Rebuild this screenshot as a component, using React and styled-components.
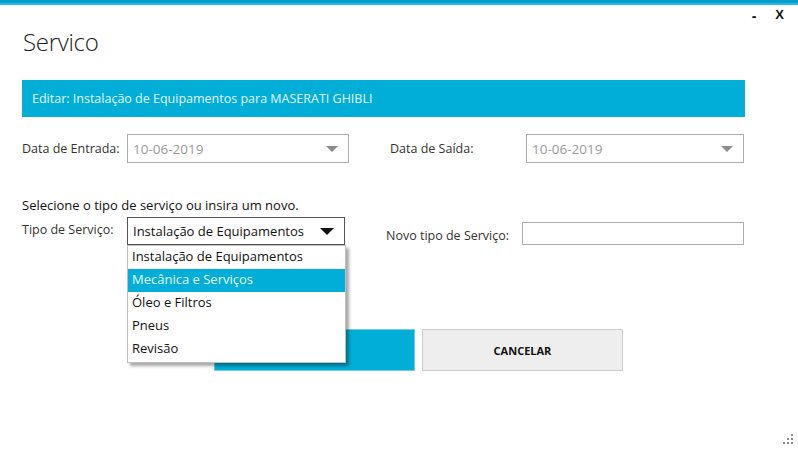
import React from "react";
import styled, { createGlobalStyle } from "styled-components";

const Global = createGlobalStyle`
  html, body { margin: 0; padding: 0; background: #fff; }
  body { font-family: "Open Sans", "Noto Sans", sans-serif; color: #222; }
  * { box-sizing: border-box; }
`;

const Window = styled.div`
  position: relative;
  width: 798px;
  height: 450px;
  background: #fff;
  overflow: hidden;
  display: flex;
  flex-direction: column;
`;

const TopBar = styled.div`
  height: 5px;
  background: #0a9dcb;
  border-bottom: 2px solid #1cbde6;
  flex-shrink: 0;
`;

const TitleRow = styled.div`
  height: 75px;
  display: flex;
  justify-content: space-between;
  padding: 0 14px 0 23px;
`;

const Title = styled.h1`
  margin: 20px 0 0;
  font-size: 24px;
  font-weight: 300;
  color: #222;
  letter-spacing: -0.3px;
`;

const Controls = styled.div`
  display: flex;
  gap: 16px;
  padding-top: 3px;
  align-items: flex-start;
`;

const Ctrl = styled.span`
  font-family: "Liberation Sans", sans-serif;
  font-size: ${(p) => p.$size}px;
  font-weight: 700;
  color: #111;
  line-height: 1;
  transform: ${(p) => p.$shift || "none"};
`;

const Header = styled.div`
  margin: 0 53px 0 22px;
  height: 37px;
  background: #00aed8;
  color: #e3f5fb;
  font-size: 12.5px;
  display: flex;
  align-items: center;
  padding-left: 10px;
`;

const Grid = styled.div`
  display: grid;
  grid-template-columns: ${(p) => p.$cols};
  align-items: ${(p) => p.$align || "center"};
  padding-left: 22px;
  margin-top: ${(p) => p.$mt}px;
`;

const Label = styled.span`
  font-size: 12.5px;
  color: #333;
  white-space: nowrap;
  align-self: ${(p) => p.$self || "center"};
  padding-bottom: ${(p) => p.$pb || 0}px;
`;

const Select = styled.div`
  position: relative;
  height: ${(p) => p.$h}px;
  border: 1px solid ${(p) => (p.$active ? "#555" : "#adadad")};
  background: #fff;
  display: flex;
  align-items: center;
  justify-content: space-between;
  padding: 0 10px 0 5px;
  font-size: ${(p) => (p.$active ? 13 : 13.5)}px;
  color: ${(p) => (p.$active ? "#111" : "#9a9a9a")};
`;

const Arrow = styled.span`
  width: 0;
  height: 0;
  border-left: ${(p) => p.$w}px solid transparent;
  border-right: ${(p) => p.$w}px solid transparent;
  border-top: ${(p) => p.$h}px solid ${(p) => p.$c};
`;

const Hint = styled.div`
  font-size: 13px;
  color: #111;
  padding-left: 22px;
  margin-top: 33px;
`;

const TextInput = styled.div`
  height: 23px;
  border: 1px solid #adadad;
  background: #fff;
`;

const List = styled.ul`
  position: absolute;
  left: -1px;
  top: 27px;
  width: 219px;
  margin: 0;
  padding: 0 0 1px;
  list-style: none;
  background: #fff;
  border: 1px solid #bfbfbf;
  box-shadow: 3px 3px 3px rgba(0, 0, 0, 0.35);
  z-index: 5;
`;

const Item = styled.li`
  height: 23px;
  line-height: 21px;
  padding-left: 4px;
  font-size: 13px;
  color: ${(p) => (p.$sel ? "#e8f7fc" : "#111")};
  background: ${(p) => (p.$sel ? "#00aed8" : "transparent")};
`;

const Buttons = styled.div`
  display: flex;
  gap: 7px;
  padding-left: 214px;
  margin-top: 84px;
`;

const Button = styled.div`
  width: 201px;
  height: 42px;
  display: flex;
  align-items: center;
  justify-content: center;
  font-size: 11px;
  font-weight: 700;
  color: #111;
  background: ${(p) => (p.$primary ? "#00aed6" : "#eeeeee")};
  border: 1px solid ${(p) => (p.$primary ? "#6fcde6" : "#cccccc")};
`;

const Grip = styled.svg`
  position: absolute;
  right: 3px;
  bottom: 4px;
`;

const items = [
  "Instalação de Equipamentos",
  "Mecânica e Serviços",
  "Óleo e Filtros",
  "Pneus",
  "Revisão",
];

export default function App() {
  return (
    <>
      <Global />
      <Window>
        <TopBar />
        <TitleRow>
          <Title>Servico</Title>
          <Controls>
            <Ctrl $size={14} $shift="translate(-3px, 1px)">-</Ctrl>
            <Ctrl $size={13}>X</Ctrl>
          </Controls>
        </TitleRow>
        <Header>Editar: Instalação de Equipamentos para MASERATI GHIBLI</Header>

        <Grid $cols="105px 222px 41px 136px 218px" $mt={17}>
          <Label>Data de Entrada:</Label>
          <Select $h={29}>
            10-06-2019
            <Arrow $w={6} $h={6} $c="#8c8c8c" />
          </Select>
          <span />
          <Label>Data de Saída:</Label>
          <Select $h={29}>
            10-06-2019
            <Arrow $w={6} $h={6} $c="#8c8c8c" />
          </Select>
        </Grid>

        <Hint>Selecione o tipo de serviço ou insira um novo.</Hint>

        <Grid $cols="105px 218px 41px 136px 222px" $align="end" $mt={3}>
          <Label $self="end" $pb={7}>Tipo de Serviço:</Label>
          <Select $h={28} $active>
            Instalação de Equipamentos
            <Arrow $w={7} $h={7} $c="#111" />
            <List>
              {items.map((t, i) => (
                <Item key={t} $sel={i === 1}>
                  {t}
                </Item>
              ))}
            </List>
          </Select>
          <span />
          <Label $self="end" $pb={1}>Novo tipo de Serviço:</Label>
          <TextInput />
        </Grid>

        <Buttons>
          <Button $primary />
          <Button>CANCELAR</Button>
        </Buttons>

        <Grip width="12" height="12" viewBox="0 0 12 12">
          {[
            [8, 0],
            [4, 4],
            [8, 4],
            [0, 8],
            [4, 8],
            [8, 8],
          ].map(([x, y]) => (
            <rect key={`${x}-${y}`} x={x} y={y} width="2" height="2" fill="#8a8a8a" />
          ))}
        </Grip>
      </Window>
    </>
  );
}
